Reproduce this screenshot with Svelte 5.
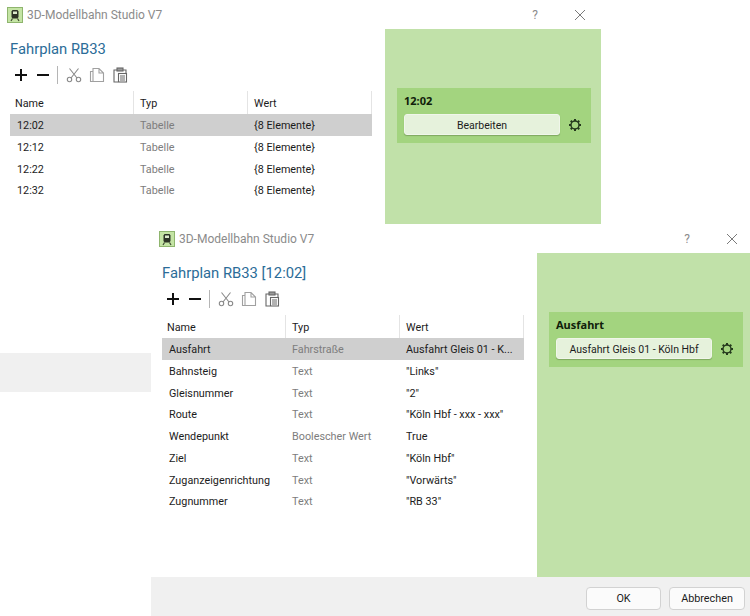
<script>
  const types = { bool: 'Boolescher Wert' }

  const timetable = {
    title: 'Fahrplan RB33',
    rows: [
      { name: '12:02', type: 'Tabelle', value: '{8 Elemente}' },
      { name: '12:12', type: 'Tabelle', value: '{8 Elemente}' },
      { name: '12:22', type: 'Tabelle', value: '{8 Elemente}' },
      { name: '12:32', type: 'Tabelle', value: '{8 Elemente}' }
    ],
    group: '12:02',
    action: 'Bearbeiten'
  }

  const entry = {
    title: 'Fahrplan RB33 [12:02]',
    rows: [
      { name: 'Ausfahrt', type: 'Fahrstraße', value: 'Ausfahrt Gleis 01 - K...' },
      { name: 'Bahnsteig', type: 'Text', value: '"Links"' },
      { name: 'Gleisnummer', type: 'Text', value: '"2"' },
      { name: 'Route', type: 'Text', value: '"Köln Hbf - xxx - xxx"' },
      { name: 'Wendepunkt', type: types.bool, value: 'True' },
      { name: 'Ziel', type: 'Text', value: '"Köln Hbf"' },
      { name: 'Zuganzeigenrichtung', type: 'Text', value: '"Vorwärts"' },
      { name: 'Zugnummer', type: 'Text', value: '"RB 33"' }
    ],
    group: 'Ausfahrt',
    action: 'Ausfahrt Gleis 01 - Köln Hbf'
  }

  const teeth = [0, 45, 90, 135, 180, 225, 270, 315]
</script>

{#snippet dialog(data, cls)}
  <section class="window {cls}">
    <header class="titlebar">
      <svg class="app-icon" viewBox="0 0 16 16" width="16" height="16">
        <rect x="0.5" y="0.5" width="15" height="15" fill="#c4e4a4" stroke="#8fb56e" />
        <path d="M5.500 3h5l1 1.500V10l-1 1.500h-5l-1-1.500V4.500z" fill="#2c3326" />
        <rect x="6" y="4.500" width="4" height="2.500" fill="#dcebcd" />
        <path d="M5.500 11.500L4 14M10.500 11.500L12 14" stroke="#3f4a32" stroke-width="1.200" fill="none" />
      </svg>
      <span class="app-name">3D-Modellbahn Studio V7</span>
      <span class="help">?</span>
      <svg class="close" viewBox="0 0 12 12" width="12" height="12">
        <path d="M1 1l10 10M11 1L1 11" stroke="#7a7a7a" stroke-width="1" fill="none" />
      </svg>
    </header>

    <div class="main">
      <div class="left">
        <h1>{data.title}</h1>
        <div class="toolbar">
          <svg viewBox="0 0 14 14" width="14" height="14">
            <path d="M7 1v12M1 7h12" stroke="#111" stroke-width="2" />
          </svg>
          <svg viewBox="0 0 14 14" width="14" height="14">
            <path d="M1 7h12" stroke="#111" stroke-width="2" />
          </svg>
          <span class="sep"></span>
          <svg viewBox="0 0 16 16" width="16" height="16" fill="none" stroke="#8a8a8a" stroke-width="1.100">
            <circle cx="3.500" cy="12.500" r="2.200" />
            <circle cx="12.500" cy="12.500" r="2.200" />
            <path d="M5 11L12.500 1.500M11 11L3.500 1.500" />
          </svg>
          <svg viewBox="0 0 16 16" width="16" height="16" fill="none" stroke="#a0a0a0" stroke-width="1.100">
            <path d="M4 4.500H1.500v10H4M4 1.500h6l4.500 4.500v8.500H4zM10 1.500V6h4.500" />
          </svg>
          <svg viewBox="0 0 16 16" width="16" height="16" fill="none" stroke="#666" stroke-width="1.100">
            <path d="M5 3H2v12h4M11 3h3v3" />
            <rect x="5" y="1" width="6" height="3" fill="#999" />
            <rect x="6.500" y="6.500" width="8" height="8.500" />
            <path d="M8 9h5M8 11h5M8 13h5" />
          </svg>
        </div>

        <div class="table">
          <div class="row head">
            <span>Name</span>
            <span>Typ</span>
            <span>Wert</span>
          </div>
          {#each data.rows as row, i}
            <div class="row" class:selected={i === 0}>
              <span class="name">{row.name}</span>
              <span class="type">{row.type}</span>
              <span class="value">{row.value}</span>
            </div>
          {/each}
        </div>
      </div>

      <aside class="panel">
        <div class="group">
          <div class="group-label">{data.group}</div>
          <div class="group-row">
            <button>{data.action}</button>
            <svg viewBox="0 0 14 14" width="14" height="14" fill="none" stroke="#24381c">
              <circle cx="7" cy="7" r="4" stroke-width="1.400" />
              {#each teeth as deg}
                <path d="M7 3V1" stroke-width="2" transform="rotate({deg} 7 7)" />
              {/each}
            </svg>
          </div>
        </div>
      </aside>
    </div>

    <footer class="footer">
      <button class="plain">OK</button>
      <button class="plain wide">Abbrechen</button>
    </footer>
  </section>
{/snippet}

<div class="desktop">
  {@render dialog(timetable, 'back')}
  {@render dialog(entry, 'front')}
</div>

<style>
  :global(body) {
    margin: 0;
    background: #fff;
  }

  .desktop {
    position: relative;
    width: 750px;
    height: 616px;
    overflow: hidden;
    font-family: Roboto, "Liberation Sans", sans-serif;
    font-size: 10.8px;
    color: #1c1c1c;
  }

  .window {
    position: absolute;
    width: 602px;
    height: 392px;
    display: flex;
    flex-direction: column;
    background: #fff;
  }

  .back {
    left: -1px;
    top: 0;
  }

  .front {
    left: 151px;
    top: 224px;
  }

  .titlebar {
    height: 29px;
    display: flex;
    align-items: center;
    padding-left: 8px;
    flex-shrink: 0;
  }

  .app-name {
    margin-left: 4px;
    font-size: 12px;
    color: #8b8b8b;
  }

  .help {
    margin-left: auto;
    width: 12px;
    text-align: center;
    font-size: 12px;
    color: #8b8b8b;
  }

  .close {
    margin-left: 33px;
    margin-right: 15px;
  }

  .main {
    flex: 1;
    display: flex;
    min-height: 0;
  }

  .left {
    width: 386px;
    padding-left: 11px;
    box-sizing: border-box;
  }

  h1 {
    margin: 11px 0 0;
    font-size: 14.8px;
    line-height: 18px;
    font-weight: 400;
    color: #2b6c98;
  }

  .toolbar {
    display: flex;
    align-items: center;
    height: 20px;
    margin-top: 7px;
    padding-left: 4px;
  }

  .toolbar svg {
    margin-right: 7px;
  }

  .toolbar svg:first-child {
    margin-right: 8px;
  }

  .toolbar svg:nth-child(2) {
    margin-right: 6px;
  }

  .sep {
    width: 1px;
    height: 18px;
    background: #b5b5b5;
    margin: 0 8px 0 1px;
  }

  .table {
    width: 362px;
    margin-top: 6.25px;
  }

  .row {
    display: grid;
    grid-template-columns: 123px 114px 1fr;
    height: 21.75px;
    align-items: center;
  }

  .row span {
    padding: 1px 0 0 7px;
    white-space: nowrap;
    overflow: hidden;
  }

  .head {
    height: 23px;
    grid-template-columns: 124px 114px 1fr;
  }

  .head span {
    height: 100%;
    box-sizing: border-box;
    line-height: 24px;
    padding-left: 6px;
    border-right: 1px solid #e4e4e4;
  }

  .head span:first-child {
    padding-left: 5px;
  }

  .selected {
    background: #cfcfcf;
  }

  .type {
    color: #7d7d7d;
  }

  .panel {
    width: 216px;
    background: #c1e1a9;
    padding: 59px 10px 0 12px;
    box-sizing: border-box;
  }

  .group {
    height: 55px;
    background: #a3d47f;
    padding: 5px 7px 0;
    box-sizing: border-box;
  }

  .group-label {
    font-family: "Noto Sans", sans-serif;
    font-size: 11px;
    font-weight: 700;
    color: #10200a;
    line-height: 15px;
  }

  .group-row {
    display: flex;
    align-items: center;
    margin-top: 6px;
  }

  .group-row svg {
    margin-left: 8px;
  }

  button {
    font: inherit;
    color: #1c1c1c;
    padding: 1px 0 0;
    cursor: pointer;
  }

  .group-row button {
    flex-shrink: 0;
    width: 156px;
    height: 21px;
    font-size: 10.5px;
    border: 1px solid #f0f6ea;
    border-radius: 3px;
    background: #e6f2dc;
    box-shadow: 0 1px 1px #7fa860;
  }

  .footer {
    height: 39px;
    flex-shrink: 0;
    background: #f0f0f0;
    display: flex;
    justify-content: flex-end;
    align-items: center;
    gap: 8px;
    padding-right: 8px;
  }

  .plain {
    width: 75px;
    height: 23px;
    margin-top: 3px;
    background: #fbfbfb;
    border: 1px solid #d2d2d2;
    border-radius: 4px;
  }

  .wide {
    width: 76px;
  }
</style>
